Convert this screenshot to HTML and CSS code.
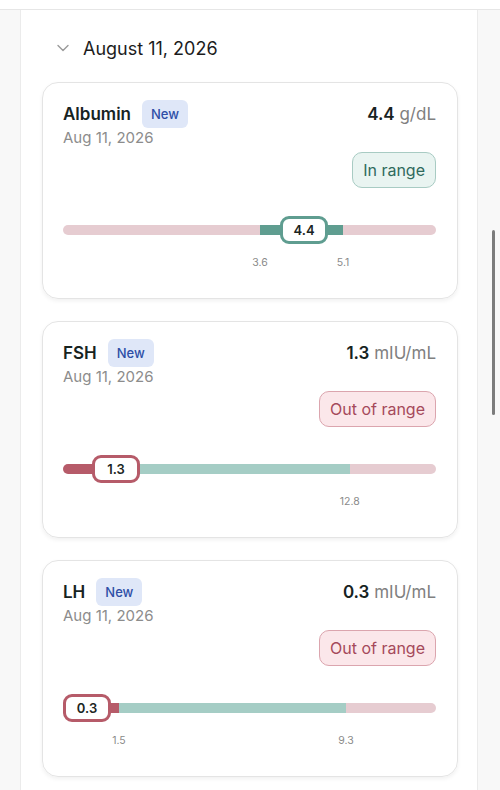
FILE: index.html
```html
<!DOCTYPE html>
<html lang="en">
<head>
    <meta charset="UTF-8">
    <meta name="viewport" content="width=device-width, initial-scale=1.0">
    <title>Lab results</title>
    <link rel="stylesheet" href="styles.css">
</head>
<body>

    <div class="topbar"></div>

    <div class="panel">
        <div class="day-header">
            <svg class="chevron" width="12" height="8" viewBox="0 0 12 8">
                <path d="M1 1.5 L6 6.5 L11 1.5" fill="none" stroke="#9a9a9a" stroke-width="1.4" stroke-linecap="round" stroke-linejoin="round"/>
            </svg>
            <span>August 11, 2026</span>
        </div>

        <div class="card">
            <div class="row">
                <div class="name"><span class="title">Albumin</span><span class="badge">New</span></div>
                <div class="value"><b>4.4</b> g/dL</div>
            </div>
            <div class="date">Aug 11, 2026</div>
            <div class="status in">In range</div>
            <div class="gauge">
                <div class="track">
                    <span class="seg low" style="width: 52.8%"></span>
                    <span class="seg mid active" style="width: 22.3%"></span>
                    <span class="seg high" style="width: 24.9%"></span>
                </div>
                <div class="marker ok" style="left: 58.2%">4.4</div>
            </div>
            <div class="ticks">
                <span style="left: 52.8%">3.6</span>
                <span style="left: 75.1%">5.1</span>
            </div>
        </div>

        <div class="card">
            <div class="row">
                <div class="name"><span class="title">FSH</span><span class="badge">New</span></div>
                <div class="value"><b>1.3</b> mIU/mL</div>
            </div>
            <div class="date">Aug 11, 2026</div>
            <div class="status out">Out of range</div>
            <div class="gauge">
                <div class="track">
                    <span class="seg low active" style="width: 14%"></span>
                    <span class="seg mid" style="width: 62.9%"></span>
                    <span class="seg high" style="width: 23.1%"></span>
                </div>
                <div class="marker bad" style="left: 7.8%">1.3</div>
            </div>
            <div class="ticks">
                <span style="left: 76.9%">12.8</span>
            </div>
        </div>

        <div class="card">
            <div class="row">
                <div class="name"><span class="title">LH</span><span class="badge">New</span></div>
                <div class="value"><b>0.3</b> mIU/mL</div>
            </div>
            <div class="date">Aug 11, 2026</div>
            <div class="status out">Out of range</div>
            <div class="gauge">
                <div class="track">
                    <span class="seg low active" style="width: 15%"></span>
                    <span class="seg mid" style="width: 60.9%"></span>
                    <span class="seg high" style="width: 24.1%"></span>
                </div>
                <div class="marker bad" style="left: 0%">0.3</div>
            </div>
            <div class="ticks">
                <span style="left: 15%">1.5</span>
                <span style="left: 75.9%">9.3</span>
            </div>
        </div>
    </div>

    <div class="scrollbar"></div>

</body>
</html>
```

FILE: styles.css
```css
body {
    margin: 0;
    background-color: #f8f8f8;
    font-family: 'Inter', 'Noto Sans', sans-serif;
    color: #1b2523;
    overflow: hidden;
    height: 790px;
}
.topbar {
    height: 9px;
    background: white;
    border-bottom: 1px solid #e6e6e6;
}
.panel {
    box-sizing: border-box;
    margin-left: 20px;
    width: 458px;
    min-height: 780px;
    background: white;
    border-left: 1px solid #ebebeb;
    border-right: 1px solid #ebebeb;
    padding: 26px 19px 0 21px;
}
.day-header {
    display: flex;
    align-items: center;
    height: 24px;
    margin-bottom: 22px;
    padding-left: 15px;
    font-size: 18px;
    color: #1c1c1c;
}
.chevron {
    margin-right: 14px;
}
.card {
    border: 1px solid #e4e4e4;
    border-radius: 16px;
    box-shadow: 0px 2px 4px rgba(0, 0, 0, 0.06);
    padding: 17px 21px 28px 20px;
    margin-bottom: 22px;
    display: flex;
    flex-direction: column;
}
.row {
    display: flex;
    justify-content: space-between;
    align-items: center;
    height: 28px;
}
.name {
    display: flex;
    align-items: center;
}
.title {
    font-size: 17px;
    font-weight: 600;
    color: #17231f;
}
.badge {
    margin-left: 11px;
    height: 28px;
    line-height: 28px;
    padding: 0 9px;
    border-radius: 6px;
    background: #dfe7f8;
    color: #2e4ea6;
    font-size: 13px;
    font-weight: 500;
}
.value {
    font-size: 17px;
    color: #808080;
}
.value b {
    font-weight: 600;
    color: #17231f;
}
.date {
    height: 20px;
    line-height: 20px;
    font-size: 15px;
    color: #8c8c8c;
}
.status {
    align-self: flex-end;
    margin-top: 4px;
    height: 34px;
    line-height: 34px;
    padding: 0 10px;
    border-radius: 10px;
    font-size: 16px;
}
.status.in {
    background: #e9f4f1;
    border: 1px solid #a8cbc3;
    color: #2f6a5d;
}
.status.out {
    background: #fbe7ea;
    border: 1px solid #dba5ae;
    color: #a5495b;
}
.gauge {
    position: relative;
    height: 28px;
    margin-top: 28px;
}
.track {
    display: flex;
    height: 10px;
    margin-top: 9px;
    border-radius: 5px;
    overflow: hidden;
}
.seg.low, .seg.high {
    background: #e6ccd1;
}
.seg.mid {
    background: #a5cdc5;
}
.seg.low.active {
    background: #b65b69;
}
.seg.mid.active {
    background: #5f9d90;
}
.marker {
    position: absolute;
    top: 0;
    width: 42px;
    height: 22px;
    line-height: 22px;
    border: 3px solid;
    border-radius: 9px;
    background: white;
    text-align: center;
    font-size: 13px;
    font-weight: 600;
    color: #1b2523;
}
.marker.ok {
    border-color: #5f9d90;
}
.marker.bad {
    border-color: #b65b69;
}
.ticks {
    position: relative;
    height: 14px;
    margin-top: 12px;
}
.ticks span {
    position: absolute;
    top: 0;
    transform: translateX(-50%);
    font-size: 10.5px;
    line-height: 14px;
    color: #8a8a8a;
}
.scrollbar {
    position: fixed;
    right: 5px;
    top: 230px;
    width: 3px;
    height: 185px;
    border-radius: 2px;
    background: #7c7c7c;
}
```
